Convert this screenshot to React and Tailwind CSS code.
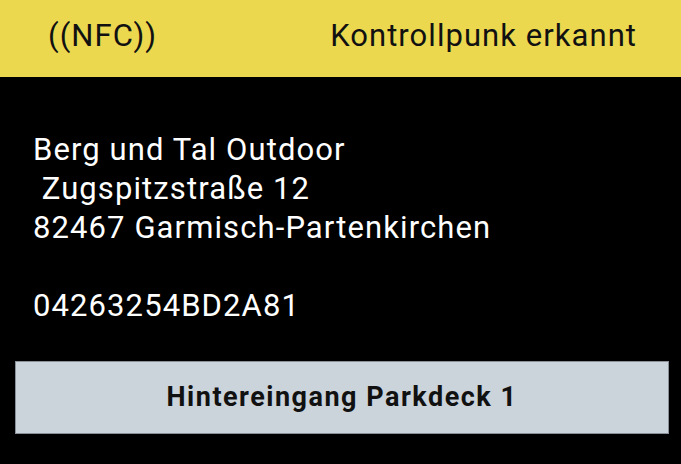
export default function App() {
  return (
    <div className="w-[681px] h-[464px] bg-black flex flex-col font-['Roboto',sans-serif] overflow-hidden">
      <div className="h-[77px] bg-[#ebd84f] flex items-center justify-between pl-[48px] pr-[44px] pb-[4px] text-[31px] tracking-[1.05px] text-[#111]">
        <span>((NFC))</span>
        <span>Kontrollpunk erkannt</span>
      </div>
      <div className="pt-[53px] pl-[33px] text-white text-[31px] tracking-[1.1px] leading-[39px] whitespace-pre">
        <div>Berg und Tal Outdoor</div>
        <div> Zugspitzstraße 12</div>
        <div>82467 Garmisch-Partenkirchen</div>
        <div>&nbsp;</div>
        <div>04263254BD2A81</div>
      </div>
      <div className="mt-[36px] ml-[15px] w-[654px] h-[73px] bg-[#cbd3db] border border-[#8a9099] flex items-center justify-center text-[27px] tracking-[1.5px] font-bold text-[#111]">
        Hintereingang Parkdeck 1
      </div>
    </div>
  );
}
